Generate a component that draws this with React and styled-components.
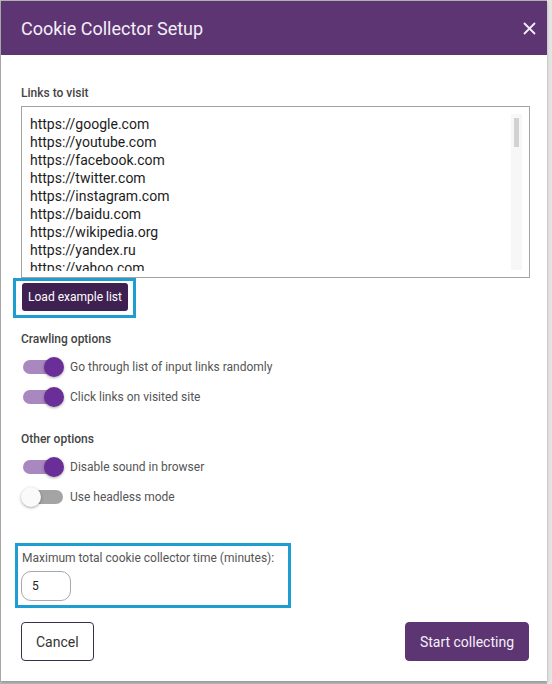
import React from 'react';
import styled, { createGlobalStyle } from 'styled-components';

const GlobalStyle = createGlobalStyle`
  html, body {
    margin: 0;
    padding: 0;
    background: #b9b9b9;
  }
  body {
    font-family: Roboto, "Liberation Sans", sans-serif;
  }
`;

const Page = styled.div`
  width: 552px;
  height: 684px;
  padding: 1px 0 0 1px;
  box-sizing: border-box;
  background: linear-gradient(to right, transparent 547px, #e4e4e4 547px);
`;

const Dialog = styled.div`
  width: 546px;
  height: 680px;
  background: #fff;
  display: flex;
  flex-direction: column;
  box-shadow: 0 1px 3px rgba(0,0,0,0.25);
`;

const Header = styled.div`
  height: 54px;
  background: #5c3572;
  display: flex;
  align-items: center;
  justify-content: space-between;
  padding: 0 5px 0 20px;
  flex-shrink: 0;
`;

const Title = styled.h1`
  margin: 0;
  font-size: 18px;
  font-weight: 400;
  color: #f4eef7;
`;

const CloseButton = styled.button`
  border: 0;
  background: none;
  padding: 0;
  width: 26px;
  height: 26px;
  display: flex;
  align-items: center;
  justify-content: center;
  color: #f4eef7;
  cursor: pointer;
`;

const Body = styled.div`
  flex: 1;
  display: flex;
  flex-direction: column;
  padding: 31px 17px 0 20px;
`;

const SectionLabel = styled.div`
  font-size: 12px;
  font-weight: 500;
  color: #444;
  line-height: 14px;
  margin-top: ${p => p.$top || 0}px;
  margin-bottom: ${p => p.$gap || 6}px;
`;

const LinksBox = styled.div`
  position: relative;
  border: 1px solid #a3a3a3;
  padding: 8px 8px 6px 8px;
  height: 172px;
  box-sizing: border-box;
`;

const LinksArea = styled.textarea`
  display: block;
  width: 100%;
  height: 156px;
  box-sizing: border-box;
  border: 0;
  outline: none;
  resize: none;
  padding: 0 20px 0 0;
  font-family: Roboto, "Liberation Sans", sans-serif;
  font-size: 14px;
  line-height: 18px;
  color: #1c1c1c;
  overflow: hidden;
`;

/* scrollbar drawn over the list's right edge */
const ScrollTrack = styled.div`
  position: absolute;
  top: 7px;
  bottom: 7px;
  right: 7px;
  width: 11px;
  background: #f7f7f7;
`;

const ScrollThumb = styled.div`
  position: absolute;
  top: 4px;
  left: 3px;
  width: 5px;
  height: 29px;
  background: #d2d2d2;
`;

const Highlight = styled.div`
  align-self: flex-start;
  display: ${p => (p.$block ? 'flex' : 'inline-flex')};
  flex-direction: column;
  border: 3px solid #1e9dd1;
  padding: ${p => p.$pad};
  margin-left: ${p => p.$shift}px;
  margin-top: ${p => p.$top || 0}px;
  width: ${p => (p.$width ? `${p.$width}px` : 'auto')};
  box-sizing: border-box;
`;

const LoadButton = styled.button`
  background: #3f2151;
  color: #fff;
  border: 0;
  border-radius: 3px;
  height: 28px;
  width: 106px;
  font-family: Roboto, "Liberation Sans", sans-serif;
  font-size: 12px;
  padding: 0;
  cursor: pointer;
`;

const OptionRow = styled.label`
  display: flex;
  align-items: center;
  height: 30px;
  gap: 7px;
  font-size: 12px;
  color: #555;
`;

const Track = styled.span`
  position: relative;
  width: 40px;
  height: 14px;
  border-radius: 7px;
  margin-left: 2px;
  background: ${p => (p.$on ? '#a888be' : '#a4a4a4')};
  flex-shrink: 0;
`;

const Thumb = styled.span`
  position: absolute;
  top: -3px;
  left: ${p => (p.$on ? '21px' : '-2px')};
  width: 20px;
  height: 20px;
  border-radius: 50%;
  background: ${p => (p.$on ? '#6a2e98' : '#fafafa')};
  box-shadow: 0 1px 3px rgba(0,0,0,0.35);
`;

const TimeLabel = styled.div`
  font-size: 12px;
  color: #555;
  line-height: 14px;
  margin: 0 0 6px 4px;
`;

const TimeInput = styled.input`
  width: 50px;
  height: 30px;
  box-sizing: border-box;
  border: 1px solid #a9a9a9;
  border-radius: 10px;
  padding: 0 10px;
  margin-left: 3px;
  font-family: Roboto, "Liberation Sans", sans-serif;
  font-size: 12px;
  color: #222;
  outline: none;
`;

const Footer = styled.div`
  display: flex;
  justify-content: space-between;
  align-items: center;
  margin-top: 14px;
  padding-right: 1px;
`;

const ActionButton = styled.button`
  height: 39px;
  padding: 0 14px;
  border-radius: 4px;
  font-family: Roboto, "Liberation Sans", sans-serif;
  font-size: 14px;
  cursor: pointer;
  background: ${p => (p.$primary ? '#5c3572' : '#fff')};
  color: ${p => (p.$primary ? '#f6f0f9' : '#333')};
  border: 1px solid ${p => (p.$primary ? '#5c3572' : '#3d2e4d')};
`;

const links = [
  'https://google.com',
  'https://youtube.com',
  'https://facebook.com',
  'https://twitter.com',
  'https://instagram.com',
  'https://baidu.com',
  'https://wikipedia.org',
  'https://yandex.ru',
  'https://yahoo.com',
  'https://amazon.com',
  'https://netflix.com',
];

const Toggle = ({ on, children }) => (
  <OptionRow>
    <Track $on={on}>
      <Thumb $on={on} />
    </Track>
    {children}
  </OptionRow>
);

const App = () => {
  return (
    <>
      <GlobalStyle />
      <Page>
        <Dialog>
          <Header>
            <Title>Cookie Collector Setup</Title>
            <CloseButton aria-label="close">
              <svg width="13" height="13" viewBox="0 0 13 13">
                <path d="M1 1L12 12M12 1L1 12" stroke="currentColor" strokeWidth="1.8" />
              </svg>
            </CloseButton>
          </Header>
          <Body>
            <SectionLabel $gap={6}>Links to visit</SectionLabel>
            <LinksBox>
              <LinksArea defaultValue={links.join('\n')} spellCheck={false} />
              <ScrollTrack>
                <ScrollThumb />
              </ScrollTrack>
            </LinksBox>
            <Highlight $pad="2px 5px 4px 6px" $shift={-8}>
              <LoadButton>Load example list</LoadButton>
            </Highlight>

            <SectionLabel $top={14} $gap={6}>Crawling options</SectionLabel>
            <Toggle on>Go through list of input links randomly</Toggle>
            <Toggle on>Click links on visited site</Toggle>

            <SectionLabel $top={20} $gap={6}>Other options</SectionLabel>
            <Toggle on>Disable sound in browser</Toggle>
            <Toggle>Use headless mode</Toggle>

            <Highlight $block $pad="5px 4px 4px 0" $shift={-6} $width={276} $top={31}>
              <TimeLabel>Maximum total cookie collector time (minutes):</TimeLabel>
              <TimeInput defaultValue="5" />
            </Highlight>

            <Footer>
              <ActionButton>Cancel</ActionButton>
              <ActionButton $primary>Start collecting</ActionButton>
            </Footer>
          </Body>
        </Dialog>
      </Page>
    </>
  );
};

export default App;
